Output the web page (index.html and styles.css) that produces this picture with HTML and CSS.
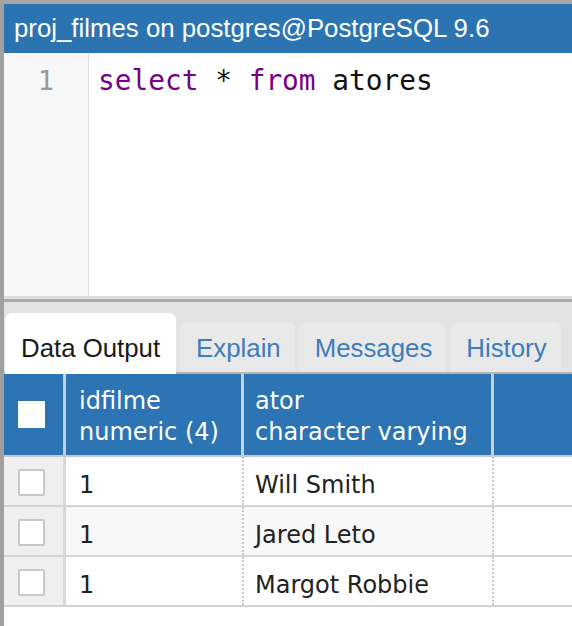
FILE: index.html
```html
<!DOCTYPE html>
<html>
<head>
<meta charset="utf-8">
<link rel="stylesheet" href="styles.css">
</head>
<body>
<div class="app">
  <div class="titlebar">proj_filmes on postgres@PostgreSQL 9.6</div>
  <div class="editor">
    <div class="gutter"><div class="lineno">1</div></div>
    <div class="code"><span class="kw">select</span> * <span class="kw">from</span> atores</div>
  </div>
  <div class="divider"></div>
  <div class="tabbar">
    <div class="tab active">Data Output</div>
    <div class="tab">Explain</div>
    <div class="tab">Messages</div>
    <div class="tab">History</div>
  </div>
  <div class="grid">
    <div class="row head">
      <div class="cell chk"><span class="box"></span></div>
      <div class="cell c1">idfilme<br>numeric (4)</div>
      <div class="cell c2">ator<br>character varying</div>
      <div class="cell fill"></div>
    </div>
    <div class="row">
      <div class="cell chk"><span class="box"></span></div>
      <div class="cell c1">1</div>
      <div class="cell c2">Will Smith</div>
    </div>
    <div class="row alt">
      <div class="cell chk"><span class="box"></span></div>
      <div class="cell c1">1</div>
      <div class="cell c2">Jared Leto</div>
    </div>
    <div class="row">
      <div class="cell chk"><span class="box"></span></div>
      <div class="cell c1">1</div>
      <div class="cell c2">Margot Robbie</div>
    </div>
  </div>
</div>
</body>
</html>
```

FILE: styles.css
```css
html, body {
  margin: 0;
  padding: 0;
  background: #ffffff;
}
.app {
  width: 568px;
  height: 622px;
  border-top: 4px solid #a6a6a6;
  border-left: 4px solid #a0a0a0;
  overflow: hidden;
  display: flex;
  flex-direction: column;
}
.titlebar {
  height: 49px;
  line-height: 49px;
  background: #2c73b1;
  color: #ffffff;
  font-family: "Liberation Sans", Arial, sans-serif;
  font-size: 25.8px;
  padding-left: 10px;
  white-space: nowrap;
}
.editor {
  height: 243px;
  display: flex;
  background: #ffffff;
}
.gutter {
  width: 84px;
  background: #f7f7f7;
  border-right: 1px solid #dddddd;
}
.lineno {
  font-family: "DejaVu Sans Mono", monospace;
  font-size: 27px;
  color: #999999;
  text-align: center;
  padding-top: 10px;
  line-height: 36px;
}
.code {
  font-family: "DejaVu Sans Mono", monospace;
  font-size: 27.8px;
  color: #111111;
  padding-left: 9px;
  padding-top: 10px;
  line-height: 36px;
  white-space: pre;
}
.kw { color: #770088; }
.divider {
  height: 3px;
  background: #dedede;
  border-bottom: 3px solid #aaaaaa;
}
.tabbar {
  height: 70px;
  background: #e3e3e3;
  display: flex;
  align-items: flex-end;
  gap: 4px;
  padding-left: 1px;
  border-bottom: 2px solid #b5b5b5;
  font-family: "Liberation Sans", Arial, sans-serif;
  font-size: 25.8px;
}
.tab {
  height: 50px;
  line-height: 52px;
  padding: 0 14px 0 16px;
  background: #e9e9e9;
  color: #3b7dbd;
  border-radius: 7px 7px 0 0;
}
.tab.active {
  height: 61px;
  line-height: 70px;
  background: #ffffff;
  color: #1a1a1a;
  padding: 0 16px 0 16px;
  margin-bottom: -2px;
}
.grid {
  display: flex;
  flex-direction: column;
}
.row {
  display: flex;
  height: 48px;
  border-bottom: 2px solid #d4d4d4;
  font-family: "DejaVu Sans", Verdana, sans-serif;
  font-size: 24px;
  color: #222222;
}
.row.head {
  height: 81px;
  background: #2c74b3;
  color: #ffffff;
  border-bottom: 2px solid #c8c8c8;
}
.cell {
  box-sizing: border-box;
  display: flex;
  align-items: center;
  padding-top: 7px;
}
.chk {
  width: 62px;
  background: #efefef;
  border-right: 3px solid #d8d8d8;
  justify-content: center;
  padding-right: 4px;
  padding-top: 2px;
}
.head .chk {
  background: transparent;
  border-right: 3px solid #c5d2df;
  padding-right: 0;
  padding-top: 0;
}
.box {
  width: 23px;
  height: 23px;
  background: #ffffff;
  border: 2px solid #c8c8c8;
  border-radius: 2px;
}
.head .box {
  width: 27px;
  height: 27px;
  border: none;
  border-radius: 0;
  margin-right: 4px;
}
.c1 {
  width: 178px;
  padding-left: 13px;
  border-right: 2px dotted #c8c8c8;
  background: #ffffff;
}
.c2 {
  width: 250px;
  padding-left: 11px;
  border-right: 2px dotted #c8c8c8;
  background: #ffffff;
}
.alt .c1, .alt .c2 { background: #f8f8f8; }
.head .c1, .head .c2 {
  background: transparent;
  line-height: 31px;
  border-right: 3px solid #c5d2df;
  align-items: flex-start;
  padding-top: 12px;
}
.fill { flex: 1; }
```
